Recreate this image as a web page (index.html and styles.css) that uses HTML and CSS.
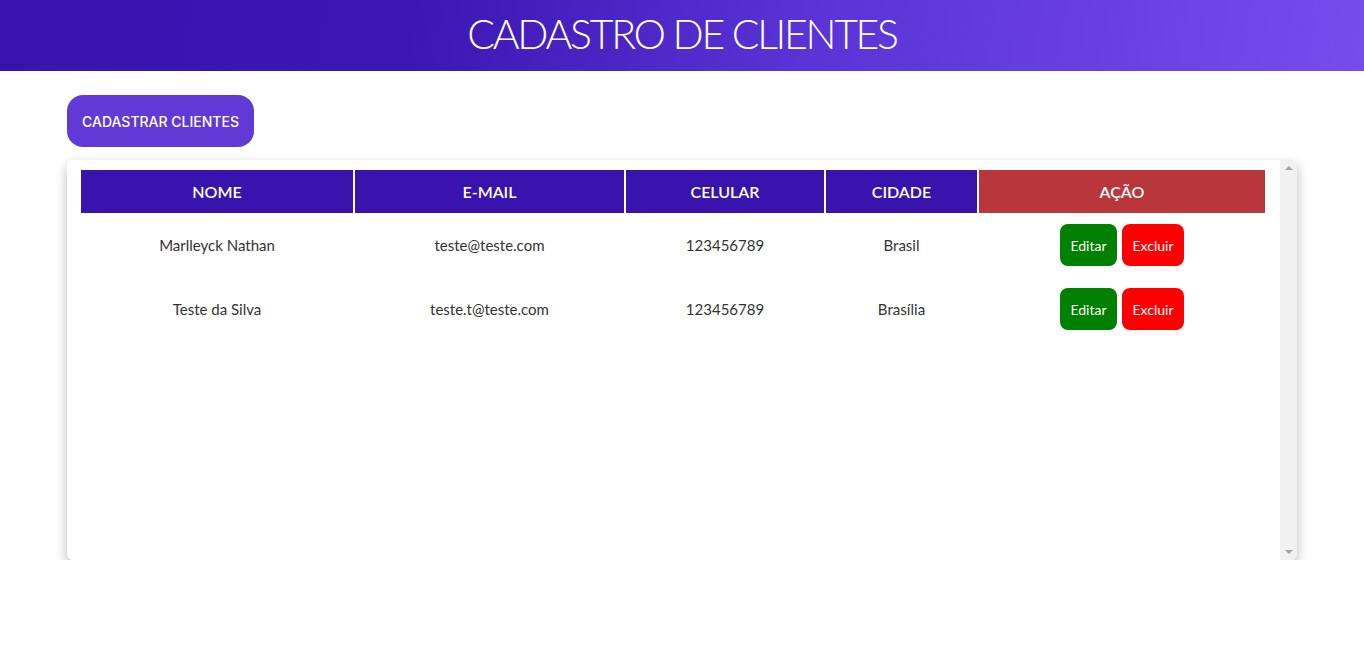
FILE: index.html
```html
<!DOCTYPE html>
<html lang="pt-BR">
<head>
<meta charset="utf-8">
<title>Cadastro de Clientes</title>
<link rel="stylesheet" href="styles.css">
</head>
<body>
<header class="topbar">
  <h1 class="title">CADASTRO DE CLIENTES</h1>
</header>
<main class="content">
  <button class="btn-cadastrar">CADASTRAR CLIENTES</button>
  <section class="card">
    <div class="table-area">
      <table class="clientes">
        <colgroup>
          <col class="c-nome"><col class="c-email"><col class="c-cel"><col class="c-cid"><col class="c-acao">
        </colgroup>
        <thead>
          <tr>
            <th>NOME</th>
            <th>E-MAIL</th>
            <th>CELULAR</th>
            <th>CIDADE</th>
            <th class="th-acao">AÇÃO</th>
          </tr>
        </thead>
        <tbody>
          <tr>
            <td>Marlleyck Nathan</td>
            <td>teste@teste.com</td>
            <td>123456789</td>
            <td>Brasil</td>
            <td><div class="acoes"><button class="btn-editar">Editar</button><button class="btn-excluir">Excluir</button></div></td>
          </tr>
          <tr>
            <td>Teste da Silva</td>
            <td>teste.t@teste.com</td>
            <td>123456789</td>
            <td>Brasília</td>
            <td><div class="acoes"><button class="btn-editar">Editar</button><button class="btn-excluir">Excluir</button></div></td>
          </tr>
        </tbody>
      </table>
    </div>
    <div class="scrollbar">
      <span class="arrow arrow-up"></span>
      <span class="arrow arrow-down"></span>
    </div>
  </section>
</main>
</body>
</html>
```

FILE: styles.css
```css
* { box-sizing: border-box; }
body {
  margin: 0;
  background: #ffffff;
  font-family: Lato, "Noto Sans", sans-serif;
}
.topbar {
  height: 71px;
  padding-bottom: 4px;
  background: linear-gradient(100deg, #3813ae 0%, #3b16b2 30%, #5a34d6 60%, #764ced 100%);
  display: flex;
  align-items: center;
  justify-content: center;
}
.title {
  margin: 0;
  color: #ffffff;
  font-family: Lato, sans-serif;
  font-weight: 300;
  font-size: 41px;
  letter-spacing: -2.3px;
  line-height: 1;
}
.content {
  padding: 24px 67px 0;
}
.btn-cadastrar {
  display: block;
  height: 52px;
  width: 187px;
  border: none;
  border-radius: 16px;
  background: #6139d6;
  color: #ffffff;
  font-family: Inter, Lato, sans-serif;
  font-size: 14px;
  font-weight: 500;
  cursor: pointer;
}
.card {
  margin-top: 13px;
  height: 400px;
  background: #ffffff;
  border-radius: 6px;
  box-shadow: 0 5px 12px rgba(0, 0, 0, 0.28);
  display: flex;
  overflow: hidden;
}
.table-area {
  flex: 1;
  padding: 10px 12px;
}
.scrollbar {
  width: 17px;
  background: #f1f1f1;
  display: flex;
  flex-direction: column;
  justify-content: space-between;
  align-items: center;
  padding: 6px 0 6px;
}
.arrow {
  width: 0;
  height: 0;
  border-left: 4px solid transparent;
  border-right: 4px solid transparent;
}
.arrow-up { border-bottom: 4px solid #a3a3a3; }
.arrow-down { border-top: 4px solid #a3a3a3; }
.clientes {
  width: 1188px;
  table-layout: fixed;
  border-collapse: separate;
  border-spacing: 2px 0;
}
.c-nome { width: 272px; }
.c-email { width: 269px; }
.c-cel { width: 198px; }
.c-cid { width: 151px; }
.c-acao { width: 286px; }
.clientes th {
  height: 43px;
  background: #3813ae;
  color: #ffffff;
  font-size: 16px;
  font-weight: 600;
  text-align: center;
  padding: 0;
}
.clientes th.th-acao { background: #b9363b; }
.clientes td {
  height: 64px;
  text-align: center;
  color: #333333;
  font-size: 15px;
  padding: 0;
}
.acoes {
  display: flex;
  justify-content: center;
  gap: 5px;
}
.acoes button {
  height: 42px;
  border: none;
  border-radius: 8px;
  color: #ffffff;
  font-family: Lato, sans-serif;
  font-size: 14px;
  padding: 0;
  cursor: pointer;
}
.btn-editar { width: 57px; background: #008000; }
.btn-excluir { width: 62px; background: #ff0000; }
```
